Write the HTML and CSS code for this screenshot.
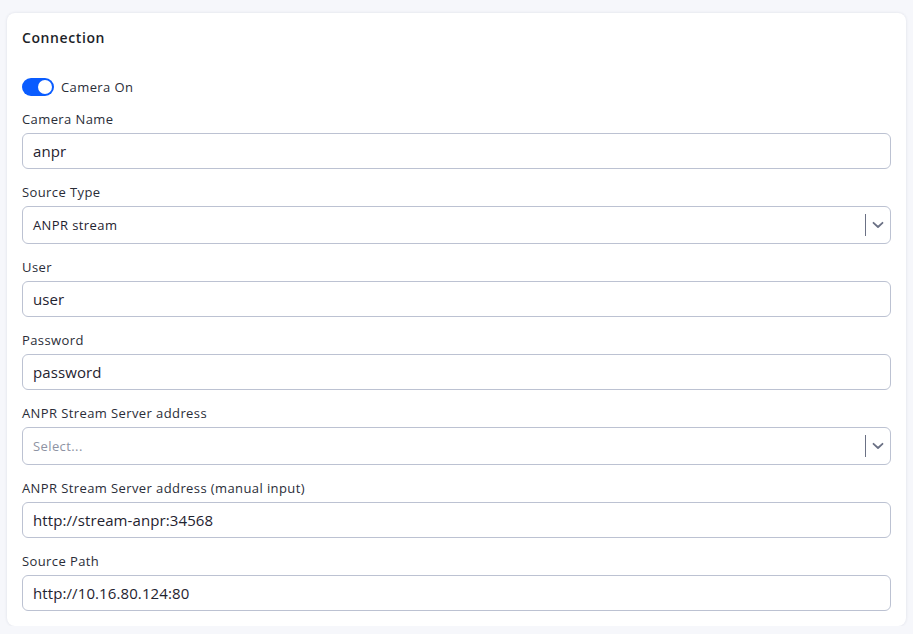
FILE: index.html
```html
<!DOCTYPE html>
<html>
<head>
<meta charset="utf-8">
<link rel="stylesheet" href="styles.css">
</head>
<body>
<div class="card">
  <h2 class="title">Connection</h2>
  <div class="toggle-row">
    <span class="switch"><span class="knob"></span></span>
    <span class="toggle-label">Camera On</span>
  </div>
  <div class="field">
    <label class="label">Camera Name</label>
    <div class="input">anpr</div>
  </div>
  <div class="field">
    <label class="label">Source Type</label>
    <div class="input select">
      <span class="sel-value">ANPR stream</span>
      <span class="sep"></span>
      <svg class="chev" width="12" height="8" viewBox="0 0 12 8"><path d="M1.5 1.8 L6 6 L10.5 1.8" fill="none" stroke="#6b7185" stroke-width="1.8" stroke-linecap="round" stroke-linejoin="round"/></svg>
    </div>
  </div>
  <div class="field">
    <label class="label">User</label>
    <div class="input">user</div>
  </div>
  <div class="field">
    <label class="label">Password</label>
    <div class="input">password</div>
  </div>
  <div class="field">
    <label class="label">ANPR Stream Server address</label>
    <div class="input select">
      <span class="sel-value placeholder">Select...</span>
      <span class="sep"></span>
      <svg class="chev" width="12" height="8" viewBox="0 0 12 8"><path d="M1.5 1.8 L6 6 L10.5 1.8" fill="none" stroke="#6b7185" stroke-width="1.8" stroke-linecap="round" stroke-linejoin="round"/></svg>
    </div>
  </div>
  <div class="field">
    <label class="label">ANPR Stream Server address (manual input)</label>
    <div class="input">http://stream-anpr:34568</div>
  </div>
  <div class="field last">
    <label class="label">Source Path</label>
    <div class="input">http://10.16.80.124:80</div>
  </div>
</div>
</body>
</html>
```
FILE: styles.css
```css
html, body {
  margin: 0;
  padding: 0;
  background: #f6f7fb;
}
body {
  padding: 13px 7px 0 7px;
  font-family: "Open Sans", "Liberation Sans", sans-serif;
  color: #1f2330;
}
.card {
  background: #ffffff;
  border-radius: 8px;
  box-shadow: 0 0 3px rgba(40, 50, 90, 0.12);
  padding: 16px 15px 15px 15px;
  width: 869px;
}
.title {
  margin: 0;
  font-size: 14px;
  font-weight: 600;
  line-height: 18px;
  letter-spacing: 0.6px;
  color: #1d1f29;
}
.toggle-row {
  display: flex;
  align-items: center;
  margin-top: 31px;
  height: 18px;
  gap: 7px;
}
.switch {
  width: 32px;
  height: 18px;
  border-radius: 9px;
  background: #0a5cff;
  display: flex;
  align-items: center;
  justify-content: flex-end;
  padding: 0 2px;
  box-sizing: border-box;
}
.knob {
  width: 14px;
  height: 14px;
  border-radius: 50%;
  background: #fff;
}
.toggle-label {
  font-size: 13px;
  letter-spacing: 0.4px;
  color: #2a2d38;
}
.field {
  margin-top: 15px;
}
.label {
  display: block;
  font-size: 13px;
  line-height: 16px;
  letter-spacing: 0.4px;
  color: #2a2d38;
}
.input {
  margin-top: 6px;
  height: 36px;
  box-sizing: border-box;
  border: 1px solid #bcc2d2;
  border-radius: 6px;
  padding: 0 10px;
  display: flex;
  align-items: center;
  font-size: 15px;
  letter-spacing: 0.1px;
  color: #1f2330;
}
.select {
  height: 38px;
  padding-right: 0;
}
.sel-value {
  flex: 1;
  font-size: 13px;
  letter-spacing: 0.4px;
  color: #1f2330;
}
.sel-value.placeholder {
  color: #8e93a3;
}
.sep {
  width: 1px;
  height: 22px;
  background: #6b7185;
}
.chev {
  margin: 0 6px 0 6px;
}
```
